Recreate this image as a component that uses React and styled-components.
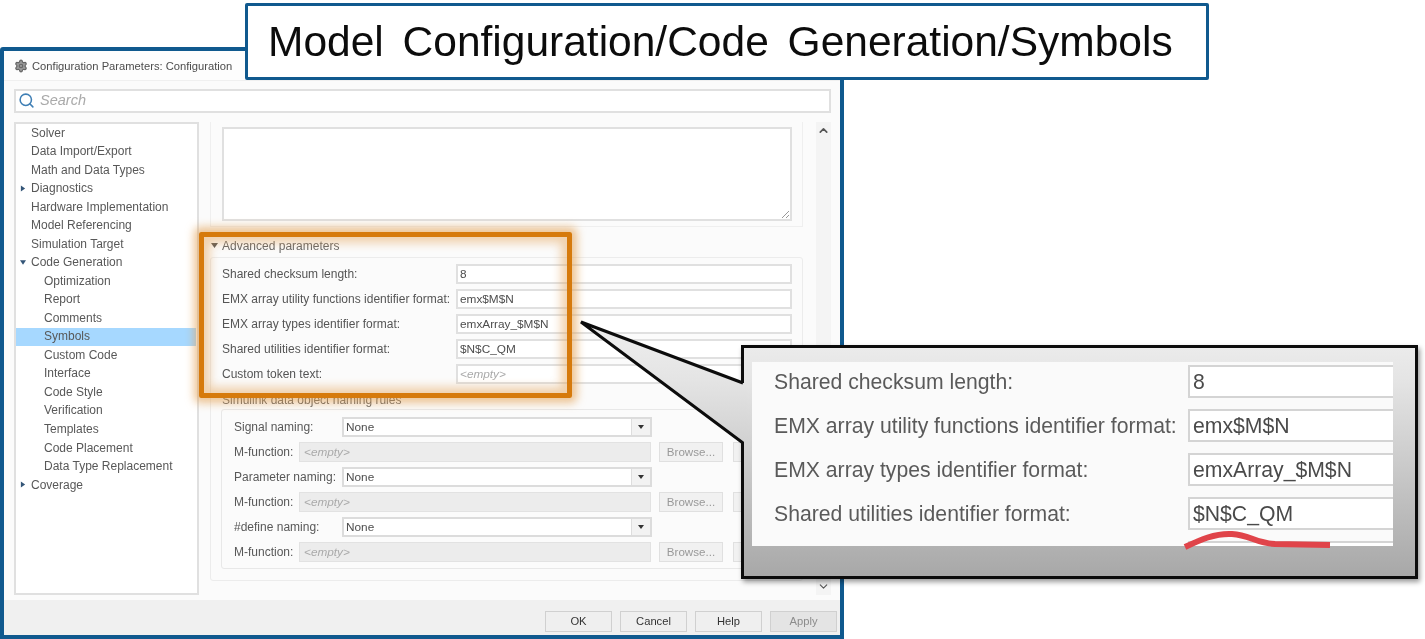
import React from 'react';
import styled, { createGlobalStyle } from 'styled-components';
import { Search as SearchIcon, Settings, ChevronUp, ChevronDown } from 'lucide-react';

const Global = createGlobalStyle`
  html, body { margin: 0; padding: 0; background: #fff; }
  body { font-family: "Liberation Sans", Arial, sans-serif; overflow: hidden; }
`;

const Canvas = styled.div`
  position: relative;
  width: 1425px;
  height: 639px;
  overflow: hidden;
  background: #fff;
  padding-top: 47px;
  box-sizing: border-box;
  filter: blur(0.4px);
`;

const Window = styled.div`
  width: 844px;
  height: 592px;
  box-sizing: border-box;
  border: 4px solid #10598e;
  border-radius: 3px 3px 0 0;
  background: #fbfbfb;
  display: flex;
  flex-direction: column;
`;

const TitleBar = styled.div`
  height: 29px;
  padding-left: 10px;
  display: flex;
  align-items: center;
  gap: 4px;
  background: #fdfdfd;
  color: #4c4c4c;
  font-size: 11.2px;
  border-bottom: 1px solid #f0f0f0;
`;

const SearchBar = styled.div`
  height: 24px;
  margin: 8px 9px 9px 10px;
  box-sizing: border-box;
  border: 2px solid #e0e0e0;
  background: #fff;
  display: flex;
  align-items: center;
  gap: 5px;
  padding: 0 0 2px 2px;
  font-style: italic;
  font-size: 14.5px;
  color: #aaa;
`;

const Body = styled.div`
  display: flex;
  height: 473px;
  margin-left: 10px;
`;

const Tree = styled.div`
  width: 185px;
  box-sizing: border-box;
  border: 2px solid #e0e0e0;
  background: #fff;
`;

const TreeRow = styled.div`
  height: 18.53px;
  box-sizing: border-box;
  display: flex;
  align-items: center;
  position: relative;
  padding: 0 0 1px ${p => (p.$child ? 28 : 15)}px;
  font-size: 12px;
  color: #585858;
  background: ${p => (p.$selected ? '#a6d8ff' : 'transparent')};
  margin-right: 1px;
`;

const Caret = styled.svg`
  position: absolute;
  left: 4px;
  top: 5px;
  width: 6px;
  height: 7px;
  fill: #335577;
`;

const Panel = styled.div`
  flex: 1;
  display: flex;
  padding-left: 11px;
`;

const PanelScroll = styled.div`
  width: 606px;
`;

const TextBox = styled.div`
  width: 593px;
  height: 105px;
  box-sizing: border-box;
  border: 1px solid #efefef;
  border-top: none;
  padding: 5px 10px 6px 11px;
`;

const TextArea = styled.div`
  height: 94px;
  box-sizing: border-box;
  border: 2px solid #e0e0e0;
  background: #fff;
  position: relative;
`;

const Grip = styled.svg`
  position: absolute;
  right: 0;
  bottom: 0;
  width: 9px;
  height: 9px;
  stroke: #999;
  stroke-width: 1;
`;

const AdvHeader = styled.div`
  height: 30px;
  box-sizing: border-box;
  padding: 13px 0 0 12px;
  font-size: 12px;
  color: #666;
  position: relative;
  line-height: 13px;
`;

const SmallCaret = styled.svg`
  position: absolute;
  left: 1px;
  top: 15px;
  width: 7px;
  height: 7px;
  fill: #555;
`;

const AdvBox = styled.div`
  width: 593px;
  height: 324px;
  box-sizing: border-box;
  border: 1px solid #ececec;
  border-radius: 3px;
  padding: 6px 10px 0 11px;
`;

const FormRow = styled.div`
  display: grid;
  grid-template-columns: 234px 336px;
  align-items: center;
  height: 20px;
  margin-bottom: 5px;
  font-size: 12px;
  color: #555;
  white-space: nowrap;
`;

const TextField = styled.div`
  height: 20px;
  box-sizing: border-box;
  border: 2px solid #e0e0e0;
  background: #fff;
  padding-left: 2px;
  line-height: 16px;
  font-size: 11.8px;
  color: ${p => (p.$placeholder ? '#aaa' : '#4d4d4d')};
  font-style: ${p => (p.$placeholder ? 'italic' : 'normal')};
`;

const Legend = styled.div`
  height: 20px;
  padding-top: 5px;
  box-sizing: border-box;
  font-size: 12px;
  color: #666;
  line-height: 13px;
`;

const NamingBox = styled.div`
  width: 572px;
  height: 160px;
  box-sizing: border-box;
  border: 1px solid #e8e8e8;
  border-radius: 3px;
  padding: 7px 0 0 12px;
  margin-left: -1px;
`;

const NamingRow = styled.div`
  display: flex;
  align-items: center;
  height: 20px;
  margin-bottom: 5px;
  font-size: 12px;
  color: #585858;
  white-space: nowrap;
`;

const NamingLabel = styled.div`
  width: ${p => p.$w}px;
  flex: none;
`;

const Select = styled.div`
  width: 310px;
  height: 20px;
  box-sizing: border-box;
  border: 2px solid #dcdcdc;
  background: #fff;
  display: flex;
  padding-left: 2px;
  line-height: 16px;
  font-size: 11.8px;
  color: #4d4d4d;
`;

const SelectText = styled.div`
  flex: 1;
`;

const SelectArrow = styled.div`
  width: 18px;
  border-left: 1px solid #ddd;
  background: #f2f2f2;
  display: flex;
  align-items: center;
  justify-content: center;
  &::after {
    content: '';
    border-left: 3px solid transparent;
    border-right: 3px solid transparent;
    border-top: 4px solid #333;
  }
`;

const DisabledField = styled.div`
  width: 352px;
  height: 20px;
  flex: none;
  box-sizing: border-box;
  border: 1px solid #e2e2e2;
  background: #ececec;
  padding-left: 4px;
  line-height: 18px;
  font-style: italic;
  font-size: 11.8px;
  color: #aaa;
`;

const Browse = styled.div`
  width: 64px;
  height: 20px;
  flex: none;
  margin-left: ${p => p.$ml}px;
  box-sizing: border-box;
  border: 1px solid #e0e0e0;
  background: #f1f1f1;
  text-align: center;
  line-height: 18px;
  font-size: 11.6px;
  color: #999;
`;

const ScrollBar = styled.div`
  width: 15px;
  background: #f4f4f4;
  display: flex;
  flex-direction: column;
  justify-content: space-between;
  align-items: center;
  padding: 2px 0;
  box-sizing: border-box;
  color: #555;
`;

const Footer = styled.div`
  flex: 1;
  margin-top: 5px;
  background: #f0f0f0;
  display: flex;
  justify-content: flex-end;
  gap: 8px;
  padding: 11px 3px 3px 0;
  box-sizing: border-box;
`;

const FootButton = styled.div`
  width: 67px;
  height: 21px;
  box-sizing: border-box;
  border: 1px solid #d0d0d0;
  background: ${p => (p.$disabled ? '#e4e4e4' : '#efefef')};
  text-align: center;
  line-height: 19px;
  font-size: 11.2px;
  color: ${p => (p.$disabled ? '#8c8c8c' : '#333')};
`;

const TitleCard = styled.div`
  position: absolute;
  left: 245px;
  top: 3px;
  width: 964px;
  height: 77px;
  box-sizing: border-box;
  border: 3.5px solid #10598e;
  border-radius: 2px;
  background: #fff;
  padding-left: 20px;
  font-size: 42.5px;
  line-height: 72px;
  color: #0c0c0c;
  word-spacing: 7px;
  white-space: nowrap;
`;

const Highlight = styled.div`
  position: absolute;
  left: 199px;
  top: 232px;
  width: 373px;
  height: 166px;
  box-sizing: border-box;
  border: 5px solid #d67a0c;
  border-radius: 2px;
  pointer-events: none;
  box-shadow: 0 0 9px 5px rgba(226, 158, 78, 0.6), inset 0 0 10px 6px rgba(226, 158, 78, 0.45);
`;

const Callout = styled.div`
  position: absolute;
  left: 741px;
  top: 345px;
  width: 677px;
  height: 234px;
  box-sizing: border-box;
  border: 3px solid #0c0c0c;
  background: linear-gradient(#ebebeb, #e4e4e4 15%, #a8a8a8 100%);
  padding: 14px 0 0 8px;
  box-shadow: 2px 3px 5px rgba(0, 0, 0, 0.4);
`;

const Zoomed = styled.div`
  width: 641px;
  height: 184px;
  background: #fafafa;
  overflow: hidden;
  padding-top: 3px;
  box-sizing: border-box;
`;

const ZoomRow = styled.div`
  display: grid;
  grid-template-columns: 436px 205px;
  align-items: center;
  height: 33px;
  margin-bottom: 11px;
  font-size: 21.2px;
  color: #5a5a5a;
`;

const ZoomLabel = styled.div`
  padding-left: 22px;
  white-space: nowrap;
`;

const ZoomField = styled.div`
  height: 33px;
  box-sizing: border-box;
  border: 2px solid #d4d4d4;
  border-right: none;
  background: #fff;
  padding-left: 3px;
  line-height: 29px;
  font-size: 21.2px;
  color: #4a4a4a;
`;

const Wedge = styled.svg`
  position: absolute;
  left: 578px;
  top: 320px;
  width: 170px;
  height: 125px;
`;

const Squiggle = styled.svg`
  position: absolute;
  left: 1180px;
  top: 525px;
  width: 155px;
  height: 28px;
`;

const treeItems = [
  ['Solver'], ['Data Import/Export'], ['Math and Data Types'], ['Diagnostics', 'closed'],
  ['Hardware Implementation'], ['Model Referencing'], ['Simulation Target'], ['Code Generation', 'open'],
  ['Optimization', 'child'], ['Report', 'child'], ['Comments', 'child'], ['Symbols', 'selected'],
  ['Custom Code', 'child'], ['Interface', 'child'], ['Code Style', 'child'], ['Verification', 'child'],
  ['Templates', 'child'], ['Code Placement', 'child'], ['Data Type Replacement', 'child'], ['Coverage', 'closed'],
];

const advanced = [
  ['Shared checksum length:', '8'],
  ['EMX array utility functions identifier format:', 'emx$M$N'],
  ['EMX array types identifier format:', 'emxArray_$M$N'],
  ['Shared utilities identifier format:', '$N$C_QM'],
];

const naming = [
  ['Signal naming:', 108],
  ['Parameter naming:', 108],
  ['#define naming:', 108],
];

export default function App() {
  return (
    <>
      <Global />
      <Canvas>
        <Window>
          <TitleBar>
            <Settings size={14} color="#666" fill="#999" strokeWidth={2} />
            Configuration Parameters: Configuration
          </TitleBar>
          <SearchBar>
            <SearchIcon size={17} color="#3f7fb5" strokeWidth={2.2} />
            Search
          </SearchBar>
          <Body>
            <Tree>
              {treeItems.map(([name, kind]) => (
                <TreeRow key={name} $child={kind === 'child' || kind === 'selected'} $selected={kind === 'selected'}>
                  {kind === 'closed' && (
                    <Caret viewBox="0 0 7 7"><polygon points="1,0 6,3.5 1,7" /></Caret>
                  )}
                  {kind === 'open' && (
                    <Caret viewBox="0 0 7 7"><polygon points="0,1 7,1 3.5,6" /></Caret>
                  )}
                  {name}
                </TreeRow>
              ))}
            </Tree>
            <Panel>
              <PanelScroll>
                <TextBox>
                  <TextArea>
                    <Grip viewBox="0 0 9 9">
                      <line x1="1" y1="8" x2="8" y2="1" />
                      <line x1="5" y1="8" x2="8" y2="5" />
                    </Grip>
                  </TextArea>
                </TextBox>
                <AdvHeader>
                  <SmallCaret viewBox="0 0 7 7"><polygon points="0,1 7,1 3.5,6" /></SmallCaret>
                  Advanced parameters
                </AdvHeader>
                <AdvBox>
                  {advanced.map(([label, value]) => (
                    <FormRow key={label}>
                      <div>{label}</div>
                      <TextField>{value}</TextField>
                    </FormRow>
                  ))}
                  <FormRow>
                    <div>Custom token text:</div>
                    <TextField $placeholder>&lt;empty&gt;</TextField>
                  </FormRow>
                  <Legend>Simulink data object naming rules</Legend>
                  <NamingBox>
                    {naming.map(([label, w]) => (
                      <React.Fragment key={label}>
                        <NamingRow>
                          <NamingLabel $w={w}>{label}</NamingLabel>
                          <Select>
                            <SelectText>None</SelectText>
                            <SelectArrow />
                          </Select>
                        </NamingRow>
                        <NamingRow>
                          <NamingLabel $w={65}>M-function:</NamingLabel>
                          <DisabledField>&lt;empty&gt;</DisabledField>
                          <Browse $ml={8}>Browse...</Browse>
                          <Browse $ml={10} />
                        </NamingRow>
                      </React.Fragment>
                    ))}
                  </NamingBox>
                </AdvBox>
              </PanelScroll>
              <ScrollBar>
                <ChevronUp size={13} strokeWidth={3} />
                <ChevronDown size={13} strokeWidth={2} />
              </ScrollBar>
            </Panel>
          </Body>
          <Footer>
            <FootButton>OK</FootButton>
            <FootButton>Cancel</FootButton>
            <FootButton>Help</FootButton>
            <FootButton $disabled>Apply</FootButton>
          </Footer>
        </Window>

        <TitleCard>Model Configuration/Code Generation/Symbols</TitleCard>
        <Highlight />

        <Callout>
          <Zoomed>
            {advanced.map(([label, value]) => (
              <ZoomRow key={label}>
                <ZoomLabel>{label}</ZoomLabel>
                <ZoomField>{value}</ZoomField>
              </ZoomRow>
            ))}
            <ZoomRow>
              <div />
              <ZoomField />
            </ZoomRow>
          </Zoomed>
        </Callout>
        <Wedge viewBox="0 0 170 125">
          <defs>
            <linearGradient id="wedgeFill" gradientUnits="userSpaceOnUse" x1="0" y1="25" x2="0" y2="259">
              <stop offset="0" stopColor="#ebebeb" />
              <stop offset="0.15" stopColor="#e4e4e4" />
              <stop offset="1" stopColor="#a8a8a8" />
            </linearGradient>
          </defs>
          <polygon points="3,2 163,63 169,63 169,122 163,122" fill="url(#wedgeFill)" />
          <polyline points="165,63 3,2 165,123" fill="none" stroke="#0c0c0c" strokeWidth="3" />
        </Wedge>
        <Squiggle viewBox="0 0 155 28">
          <path d="M5 22 C20 15 35 8 52 9 C70 10 75 18 95 19 L150 20" fill="none" stroke="#e0444a" strokeWidth="6" />
        </Squiggle>
      </Canvas>
    </>
  );
}
